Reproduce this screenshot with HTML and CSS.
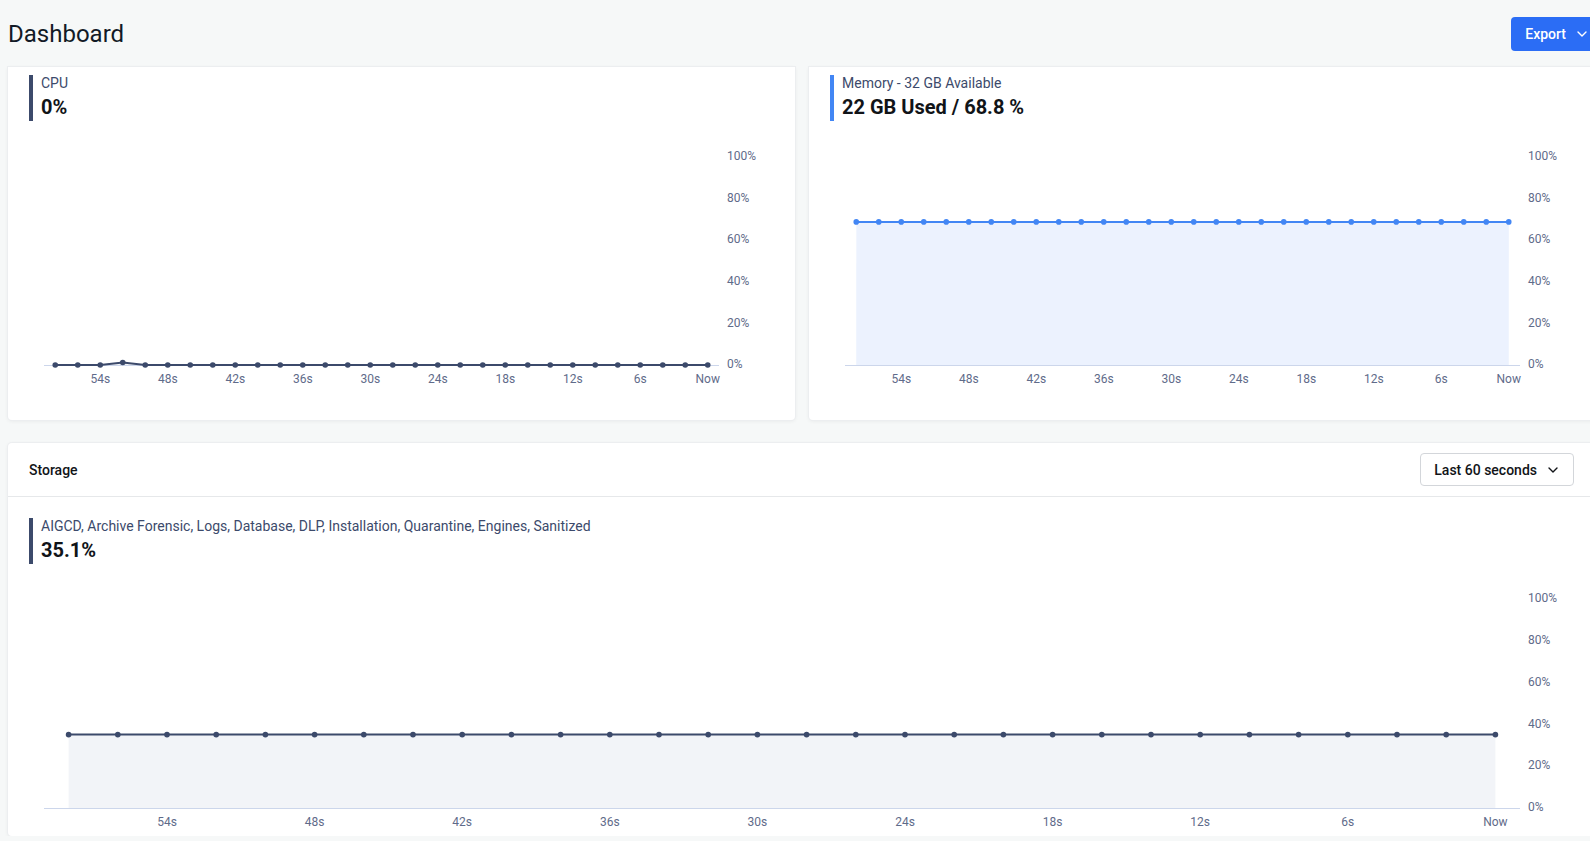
FILE: index.html
```html
<!DOCTYPE html>
<html lang="en">
<head>
  <meta charset="UTF-8" />
  <meta name="viewport" content="width=device-width, initial-scale=1.0" />
  <title>Dashboard</title>
  <link rel="stylesheet" href="styles.css">
</head>
<body>
  <div class="page">
    <header class="topbar">
      <h1>Dashboard</h1>
      <button class="btn-export" type="button">
        Export
        <svg class="chev" width="10" height="6" viewBox="0 0 10 6"><path d="M1 1l4 4 4-4" /></svg>
      </button>
    </header>

    <div class="row">
      <section class="card card-top">
        <div class="stat">
          <div class="stat-label">CPU</div>
          <div class="stat-value">0%</div>
        </div>
        <svg class="chart" id="cpuChart" height="290" data-top="27" data-bottom="235"></svg>
      </section>
      <section class="card card-top">
        <div class="stat stat-blue">
          <div class="stat-label">Memory - 32 GB Available</div>
          <div class="stat-value">22 GB Used / 68.8 %</div>
        </div>
        <svg class="chart" id="memChart" height="290" data-top="27" data-bottom="235"></svg>
      </section>
    </div>

    <section class="card storage">
      <div class="card-head">
        <span class="card-title">Storage</span>
        <button class="select" type="button">
          Last 60 seconds
          <svg class="chev" width="10" height="6" viewBox="0 0 10 6"><path d="M1 1l4 4 4-4" /></svg>
        </button>
      </div>
      <div class="stat stat-storage">
        <div class="stat-label">AIGCD, Archive Forensic, Logs, Database, DLP, Installation, Quarantine, Engines, Sanitized</div>
        <div class="stat-value">35.1%</div>
      </div>
      <svg class="chart" id="storageChart" height="263" data-top="26" data-bottom="235"></svg>
    </section>
  </div>

  <script>
    const NS = 'http://www.w3.org/2000/svg';
    const flat = (v) => Array(30).fill(v);
    const cpu = flat(0); cpu[3] = 1.2;

    function el(tag, attrs, parent) {
      const n = document.createElementNS(NS, tag);
      for (const k in attrs) n.setAttribute(k, attrs[k]);
      parent.appendChild(n);
      return n;
    }

    function drawChart(id, values, line, fill) {
      const svg = document.getElementById(id);
      const w = svg.getBoundingClientRect().width;
      const top = +svg.dataset.top, bottom = +svg.dataset.bottom;
      const x0 = 36, x1 = w - 76;
      const step = (x1 - x0) / values.length;
      const px = (i) => x0 + step * (i + 0.5);
      const py = (v) => bottom - (bottom - top) * v / 100;

      // y axis labels
      for (let i = 0; i <= 5; i++) {
        const t = el('text', { x: w - 68, y: bottom - (bottom - top) * i / 5, class: 'ax' }, svg);
        t.textContent = (i * 20) + '%';
      }
      const pts = values.map((v, i) => px(i).toFixed(1) + ',' + py(v).toFixed(1));
      el('polygon', {
        points: px(0) + ',' + bottom + ' ' + pts.join(' ') + ' ' + px(values.length - 1) + ',' + bottom,
        fill: fill
      }, svg);
      el('line', { x1: x0, x2: x1, y1: bottom + 0.5, y2: bottom + 0.5, class: 'axis-line' }, svg);
      el('polyline', { points: pts.join(' '), fill: 'none', stroke: line, 'stroke-width': 2 }, svg);
      values.forEach((v, i) => el('circle', { cx: px(i), cy: py(v), r: 2.8, fill: line }, svg));

      // x labels every 6 seconds
      for (let i = 2; i < values.length; i += 3) {
        const s = 58 - i * 2;
        const t = el('text', { x: px(i), y: bottom + 15, class: 'ax ax-x' }, svg);
        t.textContent = s === 0 ? 'Now' : s + 's';
      }
    }

    drawChart('cpuChart', cpu, '#3c4a6b', '#f2f4f8');
    drawChart('memChart', flat(68.8), '#4286f4', '#ecf2fe');
    drawChart('storageChart', flat(35.1), '#3c4a6b', '#f2f4f8');
  </script>
</body>
</html>
```

FILE: styles.css
```css
:root {
  --bg: #f6f8f8;
  --ink: #111418;
  --muted: #3c4a6b;
  --axis: #5f6b8a;
  --blue: #2b6df5;
  --navy: #3c4a6b;
  --line: #e6e8ea;
}
* { box-sizing: border-box; }
body {
  margin: 0;
  background: var(--bg);
  font-family: Roboto, "Liberation Sans", sans-serif;
  color: var(--ink);
  overflow: hidden;
}
.page {
  width: 1604px;
  padding: 0 8px;
}
.topbar {
  height: 67px;
  display: flex;
  align-items: center;
  justify-content: space-between;
}
.topbar h1 {
  margin: 0;
  font-size: 24px;
  font-weight: 400;
  color: #121a26;
}
.btn-export {
  height: 34px;
  padding: 0 9px 0 14px;
  display: flex;
  align-items: center;
  gap: 11px;
  background: var(--blue);
  color: #fff;
  border: 0;
  border-radius: 4px;
  font: 500 14px Roboto, sans-serif;
}
.chev path {
  fill: none;
  stroke: currentColor;
  stroke-width: 1.4;
  stroke-linecap: round;
  stroke-linejoin: round;
}
.row {
  display: grid;
  grid-template-columns: 1fr 1fr;
  gap: 14px;
  margin-bottom: 23px;
}
.card {
  background: #fff;
  border-radius: 4px;
  box-shadow: 0 0 0 1px #eceef0, 0 1px 4px rgba(0, 0, 0, 0.07);
}
.card-top { border-radius: 0 0 4px 4px; }
.stat {
  margin: 8px 21px 0;
  height: 46px;
  padding-left: 8px;
  border-left: 4px solid var(--navy);
}
.stat-blue { border-left-color: #4286f4; }
.stat-storage { margin-top: 21px; }
.stat-label {
  font-size: 14px;
  line-height: 17px;
  color: var(--muted);
}
.stat-value {
  font-size: 20px;
  font-weight: 700;
  line-height: 30px;
  color: var(--ink);
}
.chart {
  display: block;
  width: 100%;
  margin-top: 9px;
}
.chart .ax {
  font: 12px Roboto, sans-serif;
  fill: var(--axis);
  dominant-baseline: middle;
}
.chart .ax-x { text-anchor: middle; }
.chart .axis-line {
  stroke: #ccd6eb;
  stroke-width: 1;
}
.card-head {
  height: 54px;
  padding: 0 22px 0 21px;
  display: flex;
  align-items: center;
  justify-content: space-between;
  border-bottom: 1px solid var(--line);
}
.card-title {
  font-size: 14px;
  font-weight: 500;
}
.select {
  height: 33px;
  padding: 0 15px 0 13px;
  display: flex;
  align-items: center;
  gap: 11px;
  background: #fff;
  border: 1px solid #d3d6da;
  border-radius: 4px;
  color: var(--ink);
  font: 500 14px Roboto, sans-serif;
}
```
